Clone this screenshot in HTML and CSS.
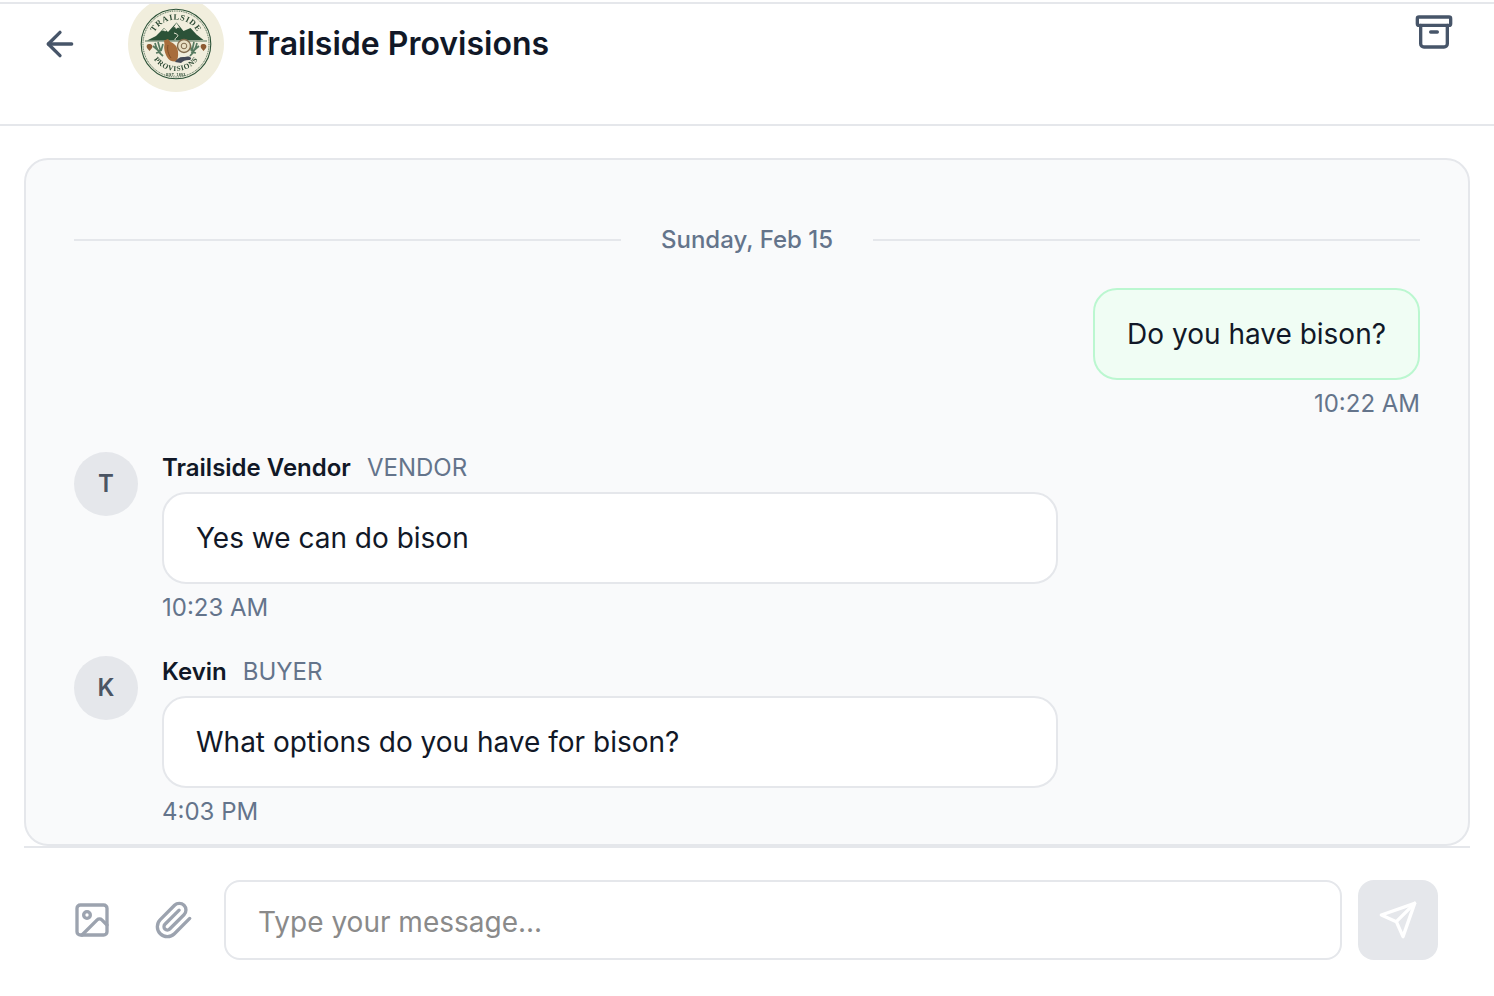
FILE: index.html
```html
<!DOCTYPE html>
<html lang="en">
<head>
<meta charset="utf-8">
<title>Trailside Provisions</title>
<link rel="stylesheet" href="styles.css">
</head>
<body>
<div class="page">
  <header class="header">
    <div class="header-row">
      <button class="icon-btn back">
        <svg width="40" height="40" viewBox="0 0 24 24" fill="none" stroke="#475569" stroke-width="2" stroke-linecap="round" stroke-linejoin="round"><path d="M19 12H5"/><path d="m12 19-7-7 7-7"/></svg>
      </button>
      <div class="logo">
        <svg width="96" height="96" viewBox="0 0 96 96">
          <defs>
            <path id="arcTop" d="M23.500 48a24.500 24.500 0 0 1 49 0"/>
            <path id="arcBottom" d="M21 48a27 27 0 0 0 54 0"/>
          </defs>
          <circle cx="48" cy="48" r="48" fill="#f1eedd"/>
          <circle cx="48" cy="48" r="34.800" fill="none" stroke="#2c5238" stroke-width="1.100"/>
          <circle cx="48" cy="48" r="33" fill="none" stroke="#2c5238" stroke-width=".9" stroke-dasharray="1 .8"/>
          <path d="M19 44.500 28 40l8-8 4 4 8.500-9.500 7 8.500 7-3 6 6.500 7 5.500z" fill="#2c5238"/>
          <path d="M48.500 27l-3 4.500 1.500-.5 1 2 2-1.500 2 1zM36 32.500l-2 2.500 2-.5 1 1 1.500-1z" fill="#f1eedd"/>
          <path d="M46 37c3 1 5 2 3 4s-3 2-1 3.500" fill="none" stroke="#f1eedd" stroke-width="1"/>
          <path d="M17 45h62" stroke="#2c5238" stroke-width=".8"/>
          <path d="M27 47c1 5 3 9 8 13M30 46l2.500 9M25 50l6.500 5.500M35 48l-2 7M28 57l5-1" stroke="#55795f" stroke-width="1.700" fill="none"/>
          <path d="M69 47c-1 5-3 9-7 13M66 46l-2 9M71 50l-6.500 5.500M62 48l1.500 7M68 57l-5-1" stroke="#55795f" stroke-width="1.700" fill="none"/>
          <path d="M36 44.500l4-1.500 2.500 3c3.500 1 7 4.500 7.500 9.500s-.5 8-1.500 10c-4.500 .5-7.500-1-9.500-4.500s-3.500-9-2.500-12.500z" fill="#a86d3c"/>
          <path d="M40 49c-1 4 0 9 3 13" stroke="#7f4f28" stroke-width="1" fill="none"/>
          <circle cx="56" cy="50" r="6.500" fill="#e9dfc4" stroke="#806a4c" stroke-width="1.400"/>
          <circle cx="56" cy="50" r="2.800" fill="none" stroke="#806a4c" stroke-width="1"/>
          <path d="M47 66c2-3 4-5 8-5s5-1 7 0 1 3-1 3c-4 0-6 1-8 3z" fill="#454a58"/>
          <path d="M21 48c-2 0-3 2-2 4l2.500 3 2.500-3c1-2 0-4-3-4zM75 48c-2 0-3 2-2 4l2.500 3 2.500-3c1-2 0-4-3-4z" fill="#8d5a33"/>
          <text class="logo-text"><textPath href="#arcTop" startOffset="50%" text-anchor="middle">TRAILSIDE</textPath></text>
          <text class="logo-text small"><textPath href="#arcBottom" startOffset="50%" text-anchor="middle">PROVISIONS</textPath></text>
          <text class="logo-est" x="48" y="79.500" text-anchor="middle">EST. 1893</text>
        </svg>
      </div>
      <h1 class="title">Trailside Provisions</h1>
      <button class="icon-btn archive">
        <svg width="40" height="40" viewBox="0 0 24 24" fill="none" stroke="#475569" stroke-width="2" stroke-linecap="round" stroke-linejoin="round"><rect x="2" y="3" width="20" height="5" rx="1"/><path d="M4 8v11a2 2 0 0 0 2 2h12a2 2 0 0 0 2-2V8"/><path d="M10 12h4"/></svg>
      </button>
    </div>
  </header>
  <main class="thread-wrap">
    <section class="thread">
      <div class="date-row"><span class="date-line"></span><span class="date-label">Sunday, Feb 15</span><span class="date-line"></span></div>
      <div class="msg-out">
        <div class="bubble bubble-out">Do you have bison?</div>
        <div class="time">10:22 AM</div>
      </div>
      <div class="msg-in">
        <div class="avatar">T</div>
        <div class="msg-body">
          <div class="sender"><span class="name">Trailside Vendor</span><span class="role">VENDOR</span></div>
          <div class="bubble bubble-in">Yes we can do bison</div>
          <div class="time">10:23 AM</div>
        </div>
      </div>
      <div class="msg-in">
        <div class="avatar">K</div>
        <div class="msg-body">
          <div class="sender"><span class="name">Kevin</span><span class="role">BUYER</span></div>
          <div class="bubble bubble-in">What options do you have for bison?</div>
          <div class="time">4:03 PM</div>
        </div>
      </div>
    </section>
  </main>
  <footer class="composer">
    <button class="icon-btn tool">
      <svg width="40" height="40" viewBox="0 0 24 24" fill="none" stroke="#9ca3af" stroke-width="2" stroke-linecap="round" stroke-linejoin="round"><rect x="3" y="3" width="18" height="18" rx="2"/><circle cx="9" cy="9" r="2"/><path d="m21 15-3.086-3.086a2 2 0 0 0-2.828 0L6 21"/></svg>
    </button>
    <button class="icon-btn tool clip">
      <svg width="40" height="40" viewBox="0 0 24 24" fill="none" stroke="#9ca3af" stroke-width="2" stroke-linecap="round" stroke-linejoin="round"><path d="m21.440 11.050-9.190 9.190a6 6 0 0 1-8.490-8.490l8.570-8.570A4 4 0 1 1 18 8.840l-8.590 8.570a2 2 0 0 1-2.830-2.830l8.490-8.480"/></svg>
    </button>
    <div class="input">Type your message...</div>
    <button class="send">
      <svg width="40" height="40" viewBox="0 0 24 24" fill="none" stroke="#fff" stroke-width="2" stroke-linecap="round" stroke-linejoin="round"><path d="m22 2-7 20-4-9-9-4Z"/><path d="M22 2 11 13"/></svg>
    </button>
  </footer>
</div>
</body>
</html>
```
FILE: styles.css
```css
* { box-sizing: border-box; }
html, body { margin: 0; padding: 0; background: #fff; }
body { font-family: Inter, "Liberation Sans", sans-serif; color: #111827; }
button { border: 0; background: none; padding: 0; font: inherit; }
.page { width: 1494px; height: 996px; padding-top: 2px; display: flex; flex-direction: column; overflow: hidden; }
.header { height: 124px; flex: none; border-top: 2px solid #e5e7eb; border-bottom: 2px solid #e5e7eb; overflow: hidden; padding: 0 40px 0 24px; }
.header-row { height: 80px; display: flex; align-items: center; }
.icon-btn { display: flex; align-items: center; justify-content: center; }
.back { width: 72px; margin-right: 32px; }
.logo { width: 96px; height: 96px; flex: none; margin-right: 24px; }
.logo svg { display: block; filter: blur(.3px); }
.logo-text { font: 700 8.200px "Liberation Serif", serif; letter-spacing: .8px; fill: #2c4a34; }
.logo-text.small { font-size: 7.400px; letter-spacing: .6px; }
.logo-est { font: 700 3.600px "Liberation Sans", sans-serif; letter-spacing: .3px; fill: #2c4a34; }
.title { margin: 0; font-size: 32px; line-height: 40px; font-weight: 600; color: #111827; }
.archive { margin-left: auto; width: 40px; height: 40px; margin-top: -24px; }
.thread-wrap { flex: none; height: 720px; padding: 32px 24px 0; }
.thread { height: 688px; border: 2px solid #e5e7eb; border-radius: 24px; background: #f9fafb; padding: 48px 48px 0; overflow: hidden; }
.date-row { display: flex; align-items: center; gap: 40px; height: 64px; }
.date-line { flex: 1; height: 2px; background: #e5e7eb; }
.date-label { font-size: 24px; line-height: 32px; font-weight: 500; color: #64748b; }
.msg-out { display: flex; flex-direction: column; align-items: flex-end; margin-top: 16px; }
.bubble { border: 2px solid #e5e7eb; border-radius: 24px; padding: 0 32px; height: 92px; display: flex; align-items: center; font-size: 28px; color: #111827; }
.bubble-out { background: #f0fdf4; border-color: #bbf7d0; }
.bubble-in { background: #fff; width: 896px; }
.time { font-size: 24px; line-height: 32px; color: #64748b; margin-top: 8px; }
.msg-in { display: flex; gap: 24px; margin-top: 32px; }
.avatar { width: 64px; height: 64px; border-radius: 50%; background: #e5e7eb; display: flex; align-items: center; justify-content: center; padding-bottom: 2px; font-size: 24px; font-weight: 600; color: #4b5563; flex: none; }
.msg-body { display: flex; flex-direction: column; align-items: flex-start; }
.sender { display: flex; gap: 16px; align-items: baseline; height: 32px; margin-bottom: 8px; line-height: 32px; }
.name { font-size: 24px; font-weight: 600; color: #111827; }
.role { font-size: 24px; color: #64748b; }
.composer { flex: 1; margin: 0 24px; border-top: 2px solid #e5e7eb; padding: 32px 32px 0 28px; display: flex; align-items: flex-start; }
.tool { width: 80px; height: 80px; }
.clip { margin-right: 12px; padding-left: 3px; }
.input { flex: 1; height: 80px; border: 2px solid #e5e7eb; border-radius: 16px; padding: 4px 32px 0; display: flex; align-items: center; font-size: 28px; color: #8a8a8a; background: #fff; }
.send { width: 80px; height: 80px; margin-left: 16px; border-radius: 16px; background: #e5e7eb; display: flex; align-items: center; justify-content: center; }
```
